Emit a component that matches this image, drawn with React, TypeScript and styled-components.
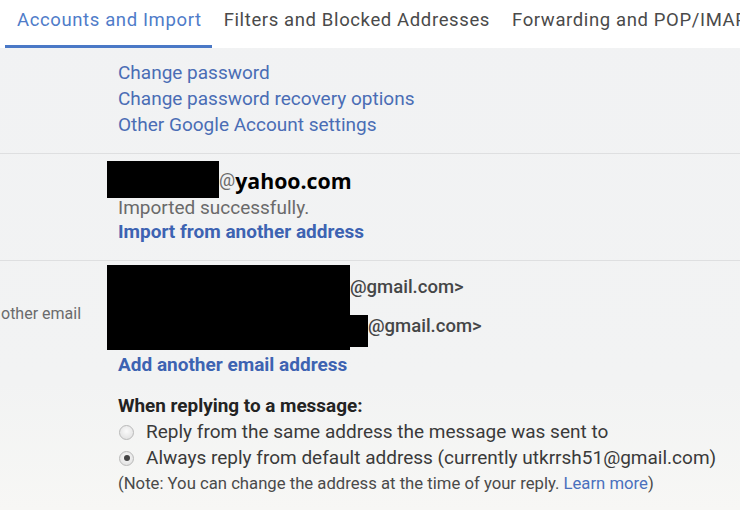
import React from "react";
import styled, { createGlobalStyle } from "styled-components";

const GlobalStyle = createGlobalStyle`
  html, body {
    margin: 0;
    padding: 0;
    width: 740px;
    height: 510px;
    overflow: hidden;
    background: linear-gradient(180deg, #f1f2f3 0%, #f2f3f3 75%, #f7f7f5 100%);
    font-family: Roboto, "Liberation Sans", sans-serif;
  }
`;

const TabBar = styled.div`
  display: flex;
  height: 48px;
  padding-left: 5px;
  background: #ffffff;
  white-space: nowrap;
  overflow: hidden;
`;

const Tab = styled.div<{ $active?: boolean }>`
  box-sizing: border-box;
  height: 48px;
  padding: 9px 10px 0 12px;
  font-size: 18.5px;
  letter-spacing: 0.62px;
  color: ${(p) => (p.$active ? "#4f7cc9" : "#4a4a4a")};
  border-bottom: 3px solid ${(p) => (p.$active ? "#4a78c6" : "transparent")};
`;

const Section = styled.div<{ $top: number; $bottom: number }>`
  display: flex;
  padding: ${(p) => p.$top}px 0 ${(p) => p.$bottom}px;
  border-bottom: 1px solid #dedfe0;
  &:last-child {
    border-bottom: none;
  }
`;

const Label = styled.div<{ $offset: number }>`
  box-sizing: border-box;
  width: 118px;
  flex: none;
  padding: ${(p) => p.$offset}px 0 0 1px;
  white-space: nowrap;
  font-size: 16px;
  line-height: 20px;
  color: #6a6b6c;
  align-self: flex-start;
`;

const Content = styled.div`
  display: flex;
  flex-direction: column;
  position: relative;
  white-space: nowrap;
`;

const Link = styled.a<{ $bold?: boolean; $lh?: number }>`
  display: block;
  font-size: 19px;
  line-height: ${(p) => p.$lh ?? 26}px;
  font-weight: ${(p) => (p.$bold ? 700 : 400)};
  color: ${(p) => (p.$bold ? "#3d63b2" : "#4a6db5")};
  text-decoration: none;
  cursor: pointer;
`;

const AccountLine = styled.div`
  display: flex;
  align-items: center;
  height: 37px;
`;

const Redact = styled.span<{ $w: number; $h: number }>`
  display: inline-block;
  width: ${(p) => p.$w}px;
  height: ${(p) => p.$h}px;
  margin-left: -11px;
  background: #000;
`;

const At = styled.span`
  font-size: 18px;
  color: #6b6b6b;
`;

const Domain = styled.span`
  font-family: "Open Sans", "DejaVu Sans", sans-serif;
  font-weight: 700;
  font-size: 21.3px;
  color: #000;
  line-height: 26px;
  padding-top: 2px;
`;

const Status = styled.div`
  font-size: 19px;
  line-height: 20px;
  color: #6a6a6a;
`;

const AddressList = styled.div`
  position: relative;
  display: flex;
  flex-direction: column;
`;

const Address = styled.div<{ $indent: number }>`
  padding-left: ${(p) => p.$indent}px;
  font-size: 18.5px;
  line-height: 39px;
  font-weight: 500;
  color: #454647;
`;

const Cover = styled.div<{ $x: number; $y: number; $w: number; $h: number }>`
  position: absolute;
  left: ${(p) => p.$x}px;
  top: ${(p) => p.$y}px;
  width: ${(p) => p.$w}px;
  height: ${(p) => p.$h}px;
  background: #000;
`;

const Heading = styled.div`
  margin-top: 14px;
  font-size: 18.9px;
  line-height: 26px;
  font-weight: 700;
  color: #232323;
`;

const Option = styled.label`
  display: flex;
  align-items: center;
  gap: 12px;
  font-size: 19px;
  line-height: 26px;
  color: #3a3a3a;
`;

const Radio = styled.span<{ $checked?: boolean }>`
  position: relative;
  box-sizing: border-box;
  width: 15px;
  height: 15px;
  margin-left: 1px;
  border-radius: 50%;
  border: 1px solid #b9b9b9;
  background: radial-gradient(circle at 50% 40%, #fafafa 0%, #dcdcdc 100%);
  &::after {
    content: "";
    display: ${(p) => (p.$checked ? "block" : "none")};
    position: absolute;
    left: 3.5px;
    top: 3.5px;
    width: 6px;
    height: 6px;
    border-radius: 50%;
    background: #444;
  }
`;

const Note = styled.div`
  font-size: 16.7px;
  line-height: 26px;
  color: #4a4a4a;
`;

const Inline = styled.a`
  color: #4a70bd;
  text-decoration: none;
`;

export default function App() {
  return (
    <>
      <GlobalStyle />
      <TabBar>
        <Tab $active>Accounts and Import</Tab>
        <Tab>Filters and Blocked Addresses</Tab>
        <Tab>Forwarding and POP/IMAP</Tab>
      </TabBar>

      <Section $top={12} $bottom={15}>
        <Label $offset={0} />
        <Content>
          <Link>Change password</Link>
          <Link>Change password recovery options</Link>
          <Link>Other Google Account settings</Link>
        </Content>
      </Section>

      <Section $top={7} $bottom={14}>
        <Label $offset={0} />
        <Content>
          <AccountLine>
            <Redact $w={112} $h={37} />
            <At>@</At>
            <Domain>yahoo.com</Domain>
          </AccountLine>
          <Status>Imported successfully.</Status>
          <Link $bold $lh={28}>Import from another address</Link>
        </Content>
      </Section>

      <Section $top={7} $bottom={0}>
        <Label $offset={36}>other email</Label>
        <Content>
          <AddressList>
            <Address $indent={232}>@gmail.com&gt;</Address>
            <Address $indent={250}>@gmail.com&gt;</Address>
            <Cover $x={-11} $y={-3} $w={243} $h={85} />
            <Cover $x={232} $y={47} $w={18} $h={32} />
          </AddressList>
          <Link $bold $lh={28} style={{ marginTop: 5 }}>
            Add another email address
          </Link>
          <Heading>When replying to a message:</Heading>
          <Option>
            <Radio />
            Reply from the same address the message was sent to
          </Option>
          <Option>
            <Radio $checked />
            Always reply from default address (currently utkrrsh51@gmail.com)
          </Option>
          <Note>
            (Note: You can change the address at the time of your reply.{" "}
            <Inline>Learn more</Inline>)
          </Note>
        </Content>
      </Section>
    </>
  );
}
